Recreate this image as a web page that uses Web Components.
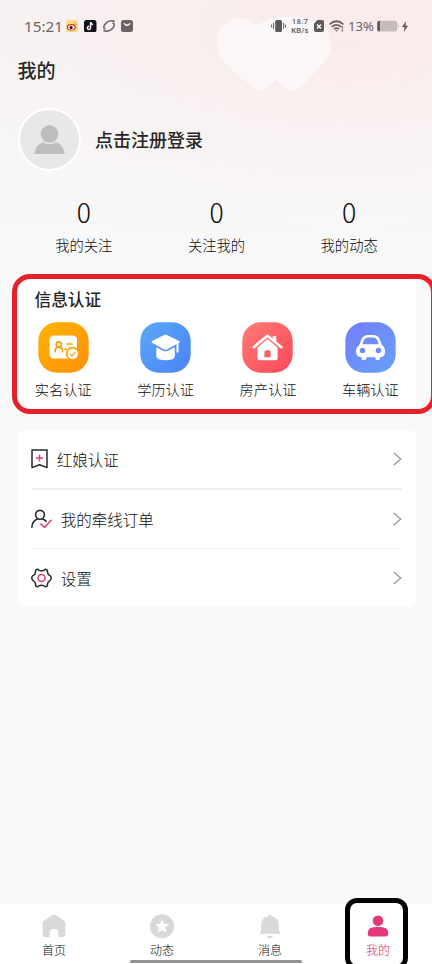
<!DOCTYPE html>
<html lang="zh-CN">
<head>
<meta charset="utf-8">
<title>我的</title>
<style>
html,body{margin:0;height:964px;overflow:hidden;background:#f9f9f9}
body{width:432px;font-family:"Noto Sans CJK SC",sans-serif;font-weight:300;color:#0c0c0c}
</style>
</head>
<body>
<mine-page></mine-page>
<script>
function define(name, css, html) {
  customElements.define(name, class extends HTMLElement {
    constructor() {
      super();
      const r = this.attachShadow({mode: 'open'});
      r.innerHTML = '<style>*{box-sizing:border-box}svg{display:block;flex:none}' + css + '</style>' +
        (typeof html === 'function' ? html(this) : html);
    }
  });
}
const icons = {
  id: `<rect x="11.500" y="13.500" width="27.500" height="23" rx="4.200" fill="#fff"/><g fill="none" stroke="#ffa00a" stroke-width="1.700" stroke-linecap="round"><circle cx="20.800" cy="22.400" r="2.600"/><path d="M17.100 29.700c0-6 7.400-6 7.400 0M29 22h5M27 27.200h1"/></g><circle cx="34.700" cy="31.700" r="6.900" fill="#ffa00a"/><circle cx="34.700" cy="31.700" r="5.200" fill="#fff"/><path d="M31.800 31.600l2.200 2.200 3.800-4" fill="none" stroke="#ffa00a" stroke-width="1.200"/>`,
  edu: `<path d="M24.200 12.900q1.300-.6 2.600 0l12.400 6.100q1.500.9 0 1.800l-12.300 6.600q-1.400.7-2.800 0l-12-6.600q-1.500-.9 0-1.800z" fill="#fff"/><path d="M16.300 25.200l7.300 3.700q1.900.9 3.800 0l7.400-3.700v9q0 2-2.400 3-6.800 2.200-13.700 0-2.400-1-2.400-3z" fill="#fff"/><path d="M37.500 21v8.700" stroke="#fff" stroke-width="2" stroke-linecap="round"/>`,
  home: `<path d="M30.700 18v-3.200q0-.8.8-.8h2q.8 0 .8.800v7z" fill="#fff"/><path d="M11.800 25.200L25.400 13.700l14 11.500" fill="none" stroke="#fff" stroke-width="2.600" stroke-linecap="round" stroke-linejoin="round"/><path fill-rule="evenodd" d="M15.500 25.400l10-8.300 10.100 8.300v10.900q0 2-2 2H17.500q-2 0-2-2zM22.400 35.200h6.200v-4.500q0-2.700-3.100-2.700t-3.100 2.700z" fill="#fff"/>`,
  car: `<path fill-rule="evenodd" d="M16.500 35.200q-5.500-.3-5.500-5.800 0-4.300 3.300-6.500l2.100-5.500q1.900-4.500 6.400-4.500h5.600q4.500 0 6.400 4.500l2.100 5.500q3.200 2.200 3.200 6.500 0 5.500-5.100 5.800v1.400q0 1.600-2.300 1.600t-2.300-1.600v-1.400h-9v1.400q0 1.600-2.400 1.600t-2.500-1.600zM17.300 22.300h16.600l-1.500-4q-1.100-2.700-4-2.700h-5.600q-2.900 0-4 2.700z" fill="#fff"/><circle cx="17.500" cy="28.400" r="2.700" fill="#6d8af9"/><circle cx="33.500" cy="28.400" r="2.700" fill="#6d8af9"/>`,
  mark: `<svg width="17" height="20" viewBox="0 0 17 20" fill="none" stroke="#292a30" stroke-width="1.500" stroke-linejoin="round"><path d="M1 1h15v17.600l-7.500-2.900L1 18.600z"/><path d="M8.500 5.500v7M5 9h7" stroke="#dc3f7c"/></svg>`,
  order: `<svg width="21" height="20" viewBox="0 0 21 20" fill="none" stroke="#292a30" stroke-width="1.600" stroke-linecap="round" stroke-linejoin="round"><circle cx="9" cy="5.800" r="4.400"/><path d="M.9 18.200q.2-5.900 5.500-8.200M11.600 10q2.200.8 3.600 2.300"/><path d="M10 15.100l3.500 3.400 6.700-7.200" stroke="#dc3f7c"/></svg>`,
  gear: `<svg width="21" height="20" viewBox="0 0 21 20" fill="none" stroke="#292a30" stroke-width="1.500" stroke-linejoin="round"><path d="M5.600 1.500Q7 1 7.800 2.100q2.700 1.500 5.400 0Q14 1 15.400 1.500q1.300.7 1 2.100.2 2.800 2.600 4.100 1.300.8 1.200 2.300.1 1.500-1.200 2.300-2.400 1.300-2.600 4.100.3 1.400-1 2.100-1.400.5-2.200-.6-2.700-1.500-5.400 0-.8 1.100-2.200.6-1.300-.7-1-2.100Q4.400 13.600 2 12.300.7 11.500.8 10 .7 8.500 2 7.700q2.400-1.300 2.600-4.100-.3-1.400 1-2.100z"/><circle cx="10.500" cy="10" r="3.500" stroke="#dc3f7c"/></svg>`,
  tabhome: `<path d="M10.600 1.100q1.400-.9 2.800 0l8.900 5.900q1.100.8 1.100 2.200v11.800q0 2-2 2h-5.200v-4.700q0-3.500-4.200-3.500t-4.200 3.500v4.700H2.600q-2 0-2-2V9.200q0-1.400 1.100-2.200z"/>`,
  tabstar: `<path fill-rule="evenodd" d="M12 .3a12 12 0 1 1 0 24 12 12 0 0 1 0-24zm0 5l-2 4.400-4.800.6 3.500 3.300-.8 4.800 4.100-2.300 4.200 2.300-.9-4.800 3.500-3.300-4.800-.6z"/>`,
  tabbell: `<path d="M10.500 2.200q0-1.700 1.500-1.700t1.500 1.700q7.300 1.200 7.300 9v5.300l1.500 2.300q.4 1-.8 1h-19q-1.200 0-.8-1l1.500-2.300v-5.300q0-7.800 7.300-9zM8.800 21.700h6.400q-.7 2.500-3.200 2.500t-3.200-2.500z"/>`,
  tabuser: `<circle cx="12" cy="6.700" r="5.300"/><path d="M1.700 19.200q0-6.200 8-6.200h4.600q8 0 8 6.200 0 3.200-3 3.200H4.700q-3 0-3-3.200z"/>`
};

define('status-bar', `:host{display:flex;height:52px;padding:0 24px;align-items:center;font:400 15.300px/20px "Noto Sans",sans-serif;color:#6a6465}
  .left,.right{display:flex;align-items:center}.left{gap:6px}.left span{width:37px;margin-right:-1px;white-space:nowrap}.right{margin-left:auto}
  .rate{width:20px;margin-left:4px;text-align:center;font:600 7.800px/9px Roboto,sans-serif;letter-spacing:.2px;white-space:nowrap}.rate div{height:9px}
  .pct{font-size:13.200px;width:26px;margin-left:4px;white-space:nowrap}`,
  `<div class="left"><span>15:21</span>
  <svg width="12" height="12" viewBox="0 0 12 12"><rect width="12" height="12" rx="2.500" fill="#fcd983"/><ellipse cx="5.300" cy="7.200" rx="4.400" ry="3.200" fill="#d23328"/><ellipse cx="5.300" cy="7.400" rx="3.200" ry="2.200" fill="#fff"/><circle cx="5.100" cy="7.500" r="1.600" fill="#251b1b"/><path d="M8 2.800q2-.2 1.900 2" fill="none" stroke="#ef9639"/></svg>
  <svg width="12.500" height="12.500" viewBox="0 0 12 12"><rect width="12" height="12" rx="2.500" fill="#101018"/><path d="M6.500 2v5.600q-.2 1.700-1.700 1.700T3.300 7.700q.1-1.600 1.900-1.600M6.600 2.300Q7 4.300 9 4.400" fill="none" stroke="#f04c6c" stroke-width="1.500"/><path d="M6.200 2v5.400q-.2 1.700-1.600 1.700T3.100 7.500q.1-1.500 1.800-1.600M6.300 2.200q.5 1.900 2.300 2" fill="none" stroke="#e9ffff" stroke-width="1.200"/></svg>
  <svg width="12" height="12" viewBox="0 0 12 12" fill="none" stroke="#6a6465" stroke-linecap="round"><path d="M1.100 8.500Q-.1 5 3.800 2.300 7.800-.1 11 1.200" stroke-width="1.500"/><path d="M11 3.500q1 3.500-2.800 6.200Q4.200 12.100 1 10.800" stroke-width="1.500"/><path d="M1 10.800l1.500-2.500M11 1.200L9.500 3.700" stroke-width=".8"/></svg>
  <svg width="12" height="12" viewBox="0 0 12 12"><rect width="12" height="12" rx="2.500" fill="#6a6465"/><path d="M3.200 3.600q2.800 3.300 5.600 0" fill="none" stroke="#fff" stroke-width="1.300" stroke-linecap="round"/></svg></div>
  <div class="right">
  <svg width="15" height="14" viewBox="0 0 15 14"><rect x="4.200" y="1" width="6.800" height="12" rx="1.600" fill="#5e595a"/><path d="M2.500 4v6M.6 5.500v3M12.600 4v6M14.500 5.500v3" stroke="#6a6465"/></svg>
  <div class="rate"><div>18.7</div><div>KB/s</div></div>
  <svg style="margin-left:4px" width="10" height="12" viewBox="0 0 10 12"><path d="M3.500 0H8q2 0 2 2v8q0 2-2 2H2q-2 0-2-2V3.500z" fill="#5e595a"/><path d="M3 4.500l4 4m0-4l-4 4" stroke="#fff" stroke-width="1.400"/></svg>
  <svg style="margin-left:5px" width="15" height="12" viewBox="0 0 15 12" fill="none" stroke="#6a6465" stroke-width="1.700"><path d="M.6 4.300q6.800-6.100 13.800 0M2.700 6.800q4.700-4 9.600 0M5 9.100q2.500-2 5 0"/><path d="M6 10.200h3l-1.500 1.600z" fill="#6a6465" stroke="none"/><path d="M13.300 6.500v2M13.300 9.500v2" stroke-width="1.300"/></svg>
  <div class="pct">13%</div>
  <svg style="margin-left:3px" width="22" height="12" viewBox="0 0 22 12"><rect x=".2" y=".7" width="20" height="10.800" rx="2.500" fill="#c6bcbd"/><path d="M3 .7v10.800h-.5Q.2 11.500.2 9V3Q.2.700 2.500.7z" fill="#5e595a"/><path d="M20.800 4q1.200.4 1.200 2t-1.200 2z" fill="#c6bcbd"/></svg>
  <svg style="margin:0 0 0 3px" width="6" height="11" viewBox="0 0 6 11"><path d="M4 0L0 6h2.500L2 11l4-6.300H3.500z" fill="#5e595a"/></svg></div>`);

define('page-backdrop', `:host{position:absolute;inset:0 0 auto;height:275px;background:linear-gradient(#f9f9f900 15%,#f9f9f9 92%),radial-gradient(circle at 345px 60px,#faeaeb 0,#f9efef 170px,#f7f2f2 350px)}`,
  `<svg width="432" height="275"><defs><linearGradient id="w" x2="1"><stop stop-color="#fff" stop-opacity=".1"/><stop offset=".5" stop-color="#fff" stop-opacity=".25"/><stop offset="1" stop-color="#fff" stop-opacity=".1"/></linearGradient></defs>
  <g fill="none" stroke="#fff" stroke-opacity=".13"><circle cx="345" cy="70" r="55"/><circle cx="345" cy="70" r="82"/><circle cx="345" cy="70" r="105"/><circle cx="345" cy="70" r="130"/><circle cx="345" cy="70" r="158"/><circle cx="100" cy="70" r="100"/><circle cx="100" cy="70" r="125"/><circle cx="100" cy="70" r="155"/></g>
  <path d="M258 25.500Q250 18 237 18 217 22 217 43q0 12 8 20l24 22q10 10 19 2l8-7 8 7q10 8 19-2l20-22Q331 55 331 45 331 20 303 19 272 13 258 25.500z" fill="#fff" fill-opacity=".52"/>
  <path d="M258 25.500Q272 13 303 19q28 1 28 26 0 10-8 18L303 85q-9 10-19 2L258 60Q243 43 258 25.500z" fill="url(#w)"/></svg>`);

define('user-profile', `:host{display:flex;align-items:center;gap:14.500px;height:64px;padding-left:17.500px}.name{font:500 18px/28px "Noto Sans CJK SC",sans-serif;color:#262626}`,
  `<svg width="63" height="63" viewBox="0 0 63 63"><circle cx="31.500" cy="31.500" r="30.500" fill="#e8e8e8" stroke="#fff" stroke-width="2"/><circle cx="31.500" cy="26" r="8.800" fill="#bdbdbd"/><path d="M16.500 46q.5-8.500 8.300-11.800 6.700 4.200 13.400 0 7.800 3.300 8.300 11.800z" fill="#bdbdbd"/></svg><div class="name"><slot></slot></div>`);

define('stat-item', `:host{flex:1;display:flex;flex-direction:column;align-items:center}.n{font:300 26.500px/34px "Noto Sans CJK SC",sans-serif}.l{font-size:14.300px;line-height:22px;margin-top:4.500px}`,
  e => `<div class="n">${e.getAttribute('value')}</div><div class="l"><slot></slot></div>`);

define('cert-item', `:host{width:102.400px;display:flex;flex-direction:column;align-items:center;gap:5px;font-size:14.200px;line-height:22px}`,
  e => `<svg width="51" height="51" viewBox="0 0 51 51"><defs><linearGradient id="g" x1="0" y1="0" x2="1" y2="1"><stop stop-color="${e.getAttribute('from')}"/><stop offset="1" stop-color="${e.getAttribute('to')}"/></linearGradient></defs><rect x=".3" y=".3" width="50.400" height="50.400" rx="18.500" fill="url(#g)"/>${icons[e.getAttribute('icon')]}</svg><div><slot></slot></div>`);

define('cert-card', `:host{display:block;position:relative;margin:-3px 16px 0 17px;height:137px;background:#fff;border-radius:8px;padding:10px 0 0}
  h2{margin:0 0 10px 17.500px;font:500 16.700px/26px "Noto Sans CJK SC",sans-serif;color:#262626}.row{display:flex;margin-left:-5px;width:409.600px}
  .mark{position:absolute;left:-5px;top:-2px;width:424px;height:140px;border:5px solid #e62129;border-radius:18px}`,
  `<h2>信息认证</h2><div class="row"><cert-item icon="id" from="#ffb400" to="#ff900d">实名认证</cert-item><cert-item icon="edu" from="#5ca9f8" to="#4a83f6">学历认证</cert-item><cert-item icon="home" from="#ff7a75" to="#fb4959">房产认证</cert-item><cert-item icon="car" from="#757cf8" to="#66a2fa">车辆认证</cert-item></div><div class="mark"></div>`);

define('menu-row', `:host{display:flex;align-items:center;font-size:15.500px;line-height:24px}.t{margin-left:8.800px;flex:1}`,
  e => `${icons[e.getAttribute('icon')]}<div class="t"><slot></slot></div><svg width="9" height="14" viewBox="0 0 9 14" fill="none" stroke="#8f8f8f" stroke-width="1.100"><path d="M.8 1l7 6-7 6"/></svg>`);

define('menu-card', `:host{display:block;margin:17px 16px 0 17px;height:177px;background:#fff;border-radius:8px;padding:0 14px}
  menu-row{height:58px}hr{margin:0;border:0;height:1px;background:#efefef}.thick{height:2px;background:#f2f2f2}`,
  `<menu-row icon="mark">红娘认证</menu-row><hr class="thick"><menu-row icon="order">我的牵线订单</menu-row><hr><menu-row icon="gear">设置</menu-row>`);

define('tab-item', `:host{flex:1;display:flex;flex-direction:column;align-items:center;padding-top:9.500px;font-size:12px;line-height:18px;fill:#d9d9d9}:host([active]){color:#d22870;fill:#e6397b}div{margin-top:2px}`,
  e => `<svg width="24" height="25" viewBox="0 0 24 25">${icons[e.getAttribute('icon')]}</svg><div><slot></slot></div>`);

define('tab-bar', `:host{position:relative;display:flex;height:60px;margin-top:auto;background:#fff}.pill{position:absolute;left:130px;top:56px;width:172px;height:3px;border-radius:2px;background:#929292}
  .mark{position:absolute;left:345px;top:-6px;width:63px;height:72px;border:5px solid #000;border-radius:12px}`,
  `<tab-item icon="tabhome">首页</tab-item><tab-item icon="tabstar">动态</tab-item><tab-item icon="tabbell">消息</tab-item><tab-item icon="tabuser" active>我的</tab-item><div class="pill"></div><div class="mark"></div>`);

define('mine-page', `:host{position:relative;display:flex;flex-direction:column;width:432px;height:964px;overflow:hidden;background:#f9f9f9}
  main{position:relative;flex:1;display:flex;flex-direction:column}h1{margin:3px 0 22px 17.500px;font:500 19px/30px "Noto Sans CJK SC",sans-serif;color:#262626}
  .stats{display:flex;height:84px;margin:24px 16.500px 0 17.500px}`,
  `<page-backdrop></page-backdrop><main><status-bar></status-bar><h1>我的</h1><user-profile>点击注册登录</user-profile>
  <div class="stats"><stat-item value="0">我的关注</stat-item><stat-item value="0">关注我的</stat-item><stat-item value="0">我的动态</stat-item></div>
  <cert-card></cert-card><menu-card></menu-card><tab-bar></tab-bar></main>`);
</script>
</body>
</html>
